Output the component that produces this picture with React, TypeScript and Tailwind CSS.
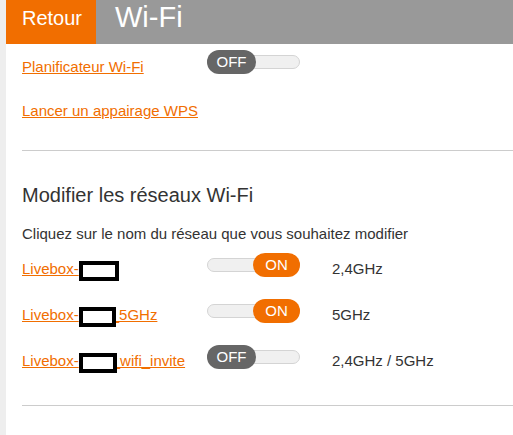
import React from "react";

function Toggle({ on }: { on: boolean }) {
  return (
    <div className="relative h-[24px] w-[93px] shrink-0">
      <div className="absolute left-0 right-0 top-[5px] h-[14px] rounded-full border border-[#d4d4d4] bg-[#f0f0f0]" />
      {on ? (
        <div className="absolute right-0 top-0 flex h-[24px] w-[47px] items-center justify-center rounded-full bg-[#f16e00] text-[15px] text-white">
          ON
        </div>
      ) : (
        <div className="absolute left-0 top-0 flex h-[24px] w-[49px] items-center justify-center rounded-full bg-[#666666] text-[15px] text-white">
          OFF
        </div>
      )}
    </div>
  );
}

// redacted part of the network name
function Masked({ w, overlap }: { w: number; overlap: boolean }) {
  return (
    <span
      className={
        overlap
          ? "relative z-10 -mr-[5px] inline-block h-[20px] border-[4px] border-black bg-white align-[-7px]"
          : "inline-block h-[20px] border-[4px] border-black bg-white align-[-7px]"
      }
      style={{ width: w }}
    />
  );
}

const networks = [
  { suffix: "", on: true, band: "2,4GHz", w: 40 },
  { suffix: "_5GHz", on: true, band: "5GHz", w: 37 },
  { suffix: "_wifi_invite", on: false, band: "2,4GHz / 5GHz", w: 38 },
];

export default function App() {
  return (
    <div className="flex h-[435px] w-[513px] overflow-hidden bg-white font-['Liberation_Sans',Arial,sans-serif] text-[#333333]">
      <div className="w-[6px] shrink-0 bg-[#eeeeee]" />
      <div className="flex-1">
        {/* Header */}
        <div className="flex h-[44px]">
          <div className="w-[90px] bg-[#f16e00] pl-[16px] pt-[6px] text-[20px] leading-[24px] text-white">
            Retour
          </div>
          <div className="flex-1 bg-[#999999] pl-[19px] text-[29px] leading-[34px] text-white">
            Wi-Fi
          </div>
        </div>

        <div className="pl-[16px]">
          {/* Scheduler */}
          <div className="mt-[6px] flex h-[25px] items-start">
            <a className="mt-[8px] w-[185px] text-[15px] leading-[17px] text-[#f16e00] underline">
              Planificateur Wi-Fi
            </a>
            <Toggle on={false} />
          </div>
          <div className="mt-[27px] text-[15px] leading-[17px]">
            <a className="text-[#f16e00] underline">Lancer un appairage WPS</a>
          </div>

          <div className="mt-[31px] h-px bg-[#cccccc]" />

          <h2 className="mt-[32px] text-[20px] leading-[24px] text-[#333333]">
            Modifier les réseaux Wi-Fi
          </h2>
          <p className="mt-[18px] text-[15px] leading-[17px]">
            Cliquez sur le nom du réseau que vous souhaitez modifier
          </p>

          <div className="mt-[11px] flex flex-col gap-[22px]">
            {networks.map((n, i) => (
              <div key={i} className="flex h-[24px] items-start">
                <div className="mt-[7px] w-[185px] text-[15px] leading-[17px]">
                  <a className="text-[#f16e00] underline">
                    Livebox-
                    <Masked w={n.w} overlap={!!n.suffix} />
                    {n.suffix}
                  </a>
                </div>
                <Toggle on={n.on} />
                <div className="ml-[32px] mt-[7px] text-[15px] leading-[17px]">{n.band}</div>
              </div>
            ))}
          </div>

          <div className="mt-[36px] h-px bg-[#cccccc]" />
        </div>
      </div>
    </div>
  );
}
